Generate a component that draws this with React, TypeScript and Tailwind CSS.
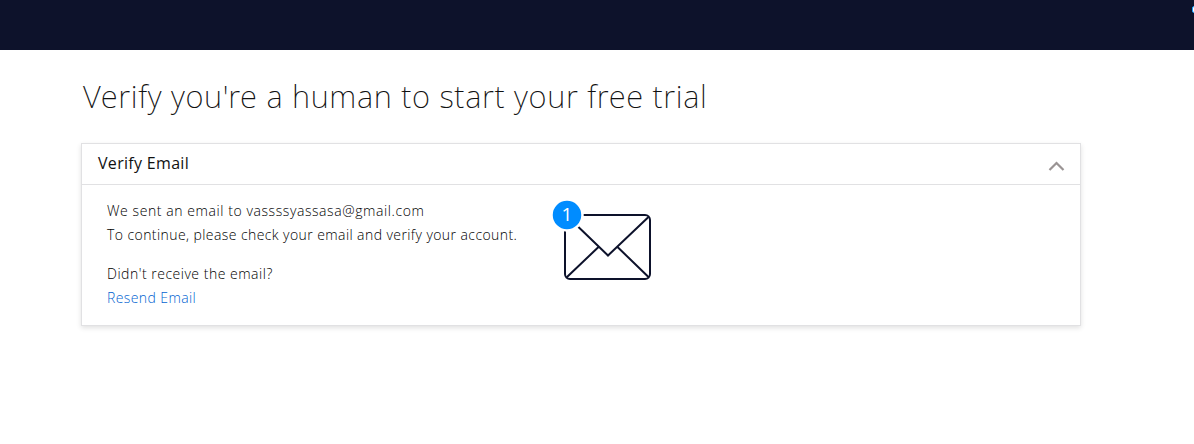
import React from "react";

function ChevronUp() {
  return (
    <svg width="18" height="11" viewBox="0 0 18 11" fill="none" stroke="#9a9494" strokeWidth="2.200" className="mt-[5px] -mr-px">
      <path d="M1.500 9 8.500 2l7 7" />
    </svg>
  );
}

function EnvelopeIcon() {
  return (
    <div className="relative h-[82px] w-[102px]">
      <svg width="102" height="82" viewBox="0 0 102 82" fill="none" stroke="#0d122b" strokeWidth="2">
        <rect x="13" y="15" width="85" height="64" rx="5" />
        <path d="M15 16 56 55.500 96.500 17M14.500 77.500 46.500 47M65.500 47 97 77.500" />
        <circle cx="15" cy="15" r="15.500" fill="#008cff" stroke="#ffffff" strokeWidth="2.500" />
      </svg>
      <span className="absolute top-0 left-0 flex h-[29px] w-[30px] items-center justify-center text-[19px] leading-none text-white">
        1
      </span>
    </div>
  );
}

export default function App() {
  return (
    <div className="min-h-[444px] overflow-hidden bg-white font-['Open_Sans','Noto_Sans',sans-serif] text-[#111111]">
      <header className="flex h-[50px] justify-end overflow-hidden bg-[#0d122b]">
        <span className="mt-1.5 -mr-1.5 h-[7px] w-2 shrink-0 rounded-[2px] border border-[#1aa0ff] bg-white" />
      </header>
      <main className="ml-[81px] w-[1000px] pt-[26px]">
        <h1 className="h-[67px] font-['Noto_Sans','Open_Sans',sans-serif] text-[31px] leading-10 font-extralight tracking-[0.66px] whitespace-nowrap">
          <span className="ml-0.5">Verify you're a human to start your free trial</span>
        </h1>
        <section className="h-[183px] border border-[#e1e1e3] shadow-[0_2px_5px_rgba(0,0,0,0.12)]">
          <div className="flex h-[41px] items-center justify-between border-b border-[#e1e1e3] pr-[15px] pl-4">
            <h2 className="-mt-0.5 text-[16px] tracking-[0.31px] whitespace-nowrap">Verify Email</h2>
            <ChevronUp />
          </div>
          <div className="flex pt-[15px] pl-[25px]">
            <div className="-mt-px w-[445px] text-[14px] leading-6 font-light whitespace-nowrap text-black">
              <p className="tracking-[0.58px]">We sent an email to vassssyassasa@gmail.com</p>
              <p className="tracking-[0.42px]">To continue, please check your email and verify your account.</p>
              <p className="mt-[15px] tracking-[0.51px]">Didn't receive the email?</p>
              <a href="#" className="tracking-[0.4px] text-[#0263d1]">Resend Email</a>
            </div>
            <EnvelopeIcon />
          </div>
        </section>
      </main>
    </div>
  );
}
